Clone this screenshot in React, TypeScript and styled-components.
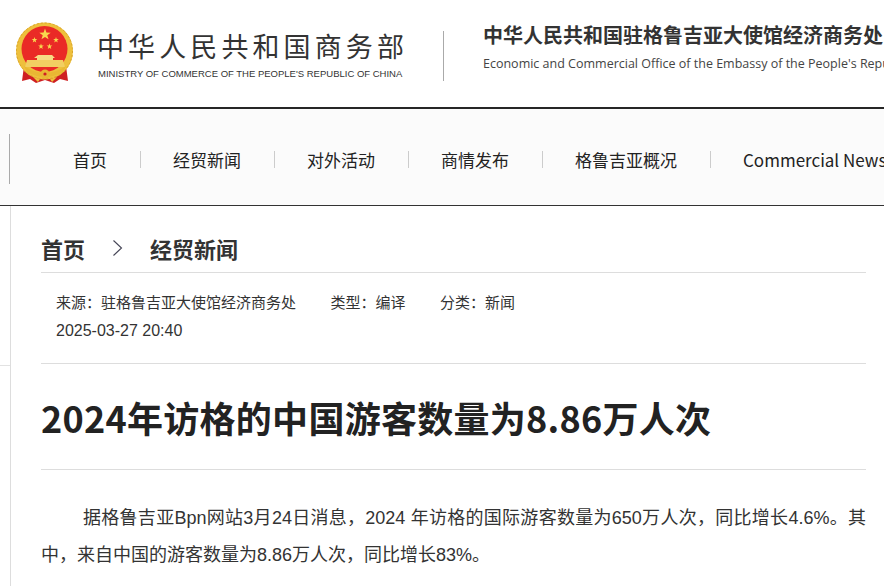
import React from 'react'
import styled, { createGlobalStyle } from 'styled-components'

const GlobalStyle = createGlobalStyle`
  html, body {
    margin: 0;
    padding: 0;
    width: 884px;
    height: 586px;
    overflow: hidden;
    background: #fff;
    font-family: "Noto Sans CJK SC", "Open Sans", sans-serif;
    color: #222;
  }
  * { box-sizing: border-box; }
`

const Page = styled.div`
  width: 884px;
  height: 586px;
  overflow: hidden;
`

const Header = styled.header`
  height: 109px;
  display: flex;
  align-items: flex-start;
  white-space: nowrap;
  overflow: hidden;
  border-bottom: 2px solid #262626;
  padding: 22px 0 0 16px;
  & > * {
    flex: none;
  }
`

const Ministry = styled.div`
  margin-left: 23px;
  padding-top: 8px;
  width: 327px;
`

const MinistryName = styled.div`
  font-size: 27px;
  line-height: 32px;
  letter-spacing: 4.1px;
  color: #333;
`

const MinistryEnglish = styled.div`
  font-family: "Liberation Sans", sans-serif;
  font-size: 9.5px;
  line-height: 14px;
  margin: 5px 0 0 1px;
  color: #333;
`

const Divider = styled.div`
  width: 1px;
  height: 50px;
  margin: 9px 0 0 19px;
  background: #aaa;
`

const Office = styled.div`
  margin-left: 39px;
`

const OfficeName = styled.div`
  font-size: 20px;
  line-height: 26px;
  font-weight: 700;
  color: #333;
`

const OfficeEnglish = styled.div`
  font-family: "Open Sans", sans-serif;
  font-size: 12.5px;
  line-height: 18px;
  margin-top: 7px;
  color: #444;
`

const Nav = styled.nav`
  height: 97px;
  background: #fbfbfb;
  border-bottom: 1px solid #333;
  display: flex;
  align-items: center;
  white-space: nowrap;
  overflow: hidden;
  padding-top: 3px;
`

const NavEdge = styled.div`
  width: 1px;
  height: 50px;
  margin-left: 9px;
  background: #aaa;
  flex: none;
`

const NavList = styled.div`
  display: flex;
  align-items: center;
  margin: 2px 0 0 31px;
`

const NavItem = styled.div<{ $first?: boolean }>`
  padding: 0 33px 0 32px;
  font-size: 17px;
  line-height: 17px;
  color: #222;
  flex: none;
  border-left: ${({ $first }) => ($first ? 'none' : '1px solid #ccc')};
`

const Main = styled.div`
  display: flex;
  height: 380px;
`

const Rail = styled.div`
  width: 10px;
  height: 160px;
  flex: none;
  border-bottom: 1px solid #e2e2e2;
`

const Body = styled.div`
  flex: 1;
  border-left: 1px solid #ddd;
  padding: 0 18px 0 30px;
`

const Crumbs = styled.div`
  height: 67px;
  display: flex;
  align-items: center;
  padding-top: 18px;
  font-size: 22px;
  font-weight: 700;
  color: #333;
  border-bottom: 1px solid #ddd;
`

const Chevron = styled.svg`
  width: 12px;
  height: 18px;
  margin: 0 26px 0 27px;
`

const Meta = styled.div`
  height: 91px;
  padding: 15px 0 0 15px;
  font-size: 15px;
  line-height: 28px;
  color: #333;
  border-bottom: 1px solid #ddd;
`

const MetaRow = styled.div`
  display: flex;
  gap: 34.5px;
`

const MetaDate = styled.div`
  margin-top: 1px;
  font-family: "Liberation Sans", sans-serif;
  font-size: 16px;
`

const Title = styled.h1`
  margin: 0;
  height: 106px;
  padding-top: 23px;
  font-size: 36px;
  letter-spacing: 0.27px;
  line-height: 60px;
  font-weight: 700;
  color: #222;
  border-bottom: 1px solid #ddd;
`

const Paragraph = styled.p`
  margin: 30px 0 0;
  font-family: "Liberation Sans", "Noto Sans CJK SC", sans-serif;
  font-size: 18px;
  line-height: 37px;
  text-indent: 42px;
  text-align: justify;
  color: #333;
`

const starPoints = (cx: number, cy: number, r: number) =>
  Array.from({ length: 10 }, (_, i) => {
    const a = (Math.PI / 5) * i - Math.PI / 2
    const d = i % 2 === 0 ? r : r * 0.4
    return `${(cx + d * Math.cos(a)).toFixed(2)},${(cy + d * Math.sin(a)).toFixed(2)}`
  }).join(' ')

const Emblem = () => (
  <svg width="58" height="62" viewBox="0 0 58 62">
    <path d="M8 44 L6 59 L14 57 L20 61 L29 58 L38 61 L44 57 L52 59 L50 44 Z" fill="#cf1f22" />
    <circle cx="28.5" cy="29" r="28.5" fill="#eec03c" />
    <circle cx="28.5" cy="29" r="28" fill="none" stroke="#d9a42a" strokeWidth="1" strokeDasharray="2 2" />
    <circle cx="28.5" cy="27" r="23" fill="#ea2a26" />
    <polygon points={starPoints(29, 12.5, 6)} fill="#f8d84e" />
    <polygon points={starPoints(18.5, 18, 3)} fill="#f8d84e" />
    <polygon points={starPoints(40, 18, 3)} fill="#f8d84e" />
    <polygon points={starPoints(25, 24.5, 3)} fill="#f8d84e" />
    <polygon points={starPoints(33.5, 24.5, 3)} fill="#f8d84e" />
    <path d="M22 33 H36 L39 36 H37 V38 H21 V36 H18 Z" fill="#f6dc84" />
    <path d="M11 38 H47 L49 45 H9 Z" fill="#f2cf62" />
    <path d="M8 44 Q29 58 50 44 L47 50 Q29 60 11 50 Z" fill="#e9b733" />
    <circle cx="29" cy="52" r="4.5" fill="#e9b733" />
    <circle cx="29" cy="52" r="1.6" fill="#cf1f22" />
    <path d="M17 55 L24 57 L22 60 Z M41 55 L34 57 L36 60 Z" fill="#eec03c" />
  </svg>
)

const navItems = ['首页', '经贸新闻', '对外活动', '商情发布', '格鲁吉亚概况', 'Commercial News']

const App = () => (
  <Page>
    <GlobalStyle />
    <Header>
      <Emblem />
      <Ministry>
        <MinistryName>中华人民共和国商务部</MinistryName>
        <MinistryEnglish>MINISTRY OF COMMERCE OF THE PEOPLE'S REPUBLIC OF CHINA</MinistryEnglish>
      </Ministry>
      <Divider />
      <Office>
        <OfficeName>中华人民共和国驻格鲁吉亚大使馆经济商务处</OfficeName>
        <OfficeEnglish>Economic and Commercial Office of the Embassy of the People's Republic of China</OfficeEnglish>
      </Office>
    </Header>
    <Nav>
      <NavEdge />
      <NavList>
        {navItems.map((item, i) => (
          <NavItem key={item} $first={i === 0}>{item}</NavItem>
        ))}
      </NavList>
    </Nav>
    <Main>
      <Rail />
      <Body>
        <Crumbs>
          <span>首页</span>
          <Chevron viewBox="0 0 12 18">
            <path d="M1.5 1.5 L9.5 9 L1.5 16.5" fill="none" stroke="#445" strokeWidth="1.1" />
          </Chevron>
          <span>经贸新闻</span>
        </Crumbs>
        <Meta>
          <MetaRow>
            <span>来源：驻格鲁吉亚大使馆经济商务处</span>
            <span>类型：编译</span>
            <span>分类：新闻</span>
          </MetaRow>
          <MetaDate>2025-03-27 20:40</MetaDate>
        </Meta>
        <Title>2024年访格的中国游客数量为8.86万人次</Title>
        <Paragraph>
          据格鲁吉亚Bpn网站3月24日消息，2024 年访格的国际游客数量为650万人次，同比增长4.6%。其中，来自中国的游客数量为8.86万人次，同比增长83%。
        </Paragraph>
      </Body>
    </Main>
  </Page>
)

export default App
